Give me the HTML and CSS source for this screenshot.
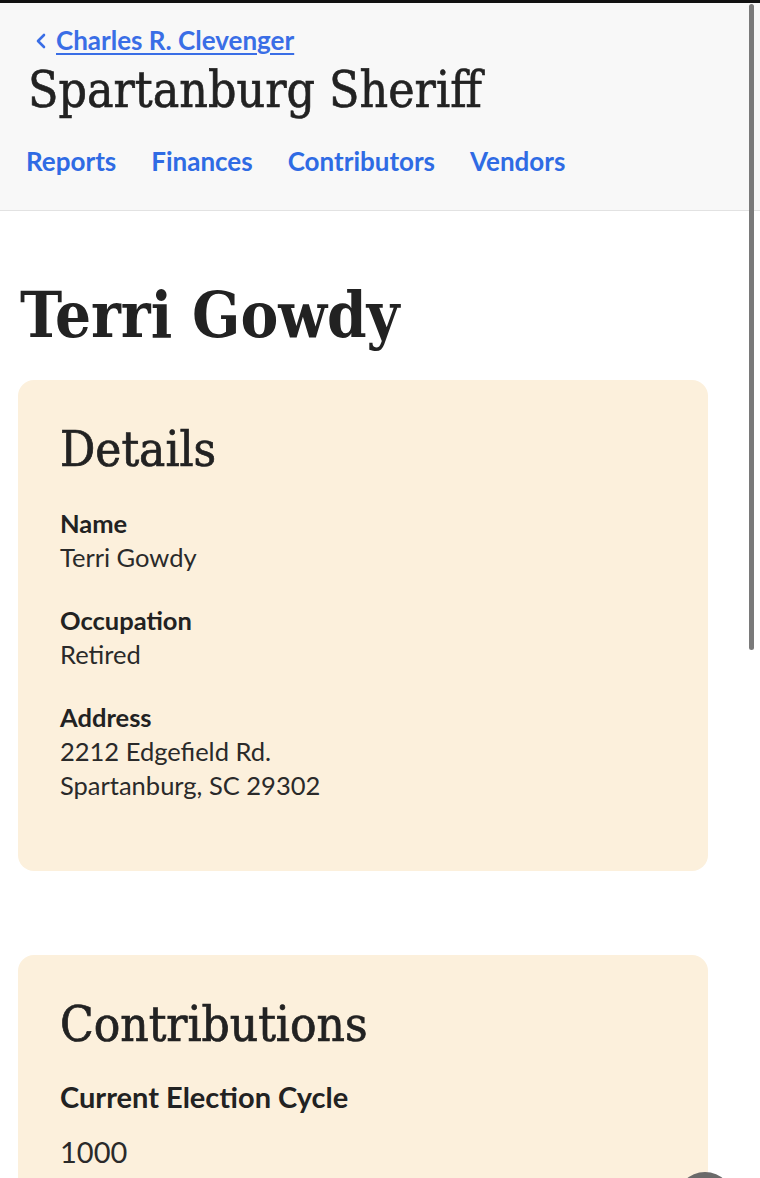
FILE: index.html
```html
<!DOCTYPE html>
<html lang="en">
<head>
<meta charset="utf-8">
<title>Terri Gowdy</title>
<link rel="stylesheet" href="styles.css">
</head>
<body>
<header class="site-header">
  <a class="crumb" href="#"><svg class="chev" width="12" height="16" viewBox="0 0 12 16"><path d="M9 2 L3 8 L9 14" fill="none" stroke="currentColor" stroke-width="2.6" stroke-linecap="round" stroke-linejoin="round"/></svg><span class="crumb-text">Charles R. Clevenger</span></a>
  <div class="site-title">Spartanburg Sheriff</div>
  <nav class="nav">
    <a href="#">Reports</a>
    <a href="#">Finances</a>
    <a href="#">Contributors</a>
    <a href="#">Vendors</a>
  </nav>
</header>
<main class="main">
  <h1 class="page-title">Terri Gowdy</h1>
  <section class="card">
    <h2 class="card-title">Details</h2>
    <dl class="fields">
      <dt>Name</dt>
      <dd>Terri Gowdy</dd>
      <dt>Occupation</dt>
      <dd>Retired</dd>
      <dt>Address</dt>
      <dd>2212 Edgefield Rd.<br>Spartanburg, SC 29302</dd>
    </dl>
  </section>
  <section class="card card-contrib">
    <h2 class="card-title">Contributions</h2>
    <h3 class="sub">Current Election Cycle</h3>
    <p class="amount">1000</p>
  </section>
</main>
<div class="scrollbar"></div>
<div class="fab"></div>
</body>
</html>
```
FILE: styles.css
```css
html, body {
  margin: 0;
  padding: 0;
}
body {
  background: #fff;
  color: #222;
  font-family: "Lato", "Open Sans", sans-serif;
  border-top: 3px solid #111;
  height: 1175px;
  overflow: hidden;
}
.site-header {
  background: #f8f8f8;
  border-bottom: 1px solid #e2e2e2;
  padding: 22px 26px 33px;
}
.crumb {
  display: flex;
  align-items: center;
  color: #3a6ee6;
  text-decoration: none;
  font-size: 26px;
  line-height: 30px;
  margin-left: 9px;
}
.chev {
  margin: 2px 9px 0 0;
  flex: none;
}
.crumb-text {
  text-decoration: underline;
  text-decoration-thickness: 2px;
  text-underline-offset: 3px;
  font-weight: 700;
}
.site-title,
.page-title,
.card-title {
  font-family: "DejaVu Serif", serif;
  font-stretch: condensed;
}
.site-title {
  font-size: 49.5px;
  line-height: 56px;
  margin: 7px 0 0 2px;
  color: #222;
  -webkit-text-stroke: 0.6px #222;
}
.nav {
  display: flex;
  gap: 35px;
  margin-top: 27px;
}
.nav a {
  color: #2f6be4;
  text-decoration: none;
  font-weight: 700;
  font-size: 26px;
  line-height: 32px;
}
.main {
  padding: 0 52px 0 18px;
}
.page-title {
  font-weight: 700;
  font-size: 63px;
  line-height: 80px;
  margin: 64px 0 25px 2px;
}
.card {
  background: #fcf0dc;
  border-radius: 16px;
  padding: 42px 42px 40px;
}
.card-contrib {
  margin-top: 84px;
}
.card-title {
  font-weight: 400;
  font-size: 49px;
  line-height: 56px;
  margin: 0;
  -webkit-text-stroke: 0.7px #222;
}
.fields {
  margin: 28px 0 0;
}
.fields dt {
  font-weight: 700;
  font-size: 25.5px;
  line-height: 34px;
}
.fields dd {
  margin: 0 0 29px;
  font-size: 25.5px;
  line-height: 34px;
  color: #2a2a2a;
}
.sub {
  font-weight: 700;
  font-size: 29px;
  line-height: 34px;
  margin: 27px 0 0;
}
.amount {
  font-size: 29px;
  line-height: 34px;
  margin: 21px 0 0;
  color: #2a2a2a;
}
.scrollbar {
  position: absolute;
  top: 4px;
  left: 749px;
  width: 5px;
  height: 646px;
  background: #7a7a7a;
  border-radius: 3px;
}
.fab {
  position: absolute;
  left: 676px;
  top: 1172px;
  width: 58px;
  height: 58px;
  border-radius: 50%;
  background: #6a6a6a;
}
```
